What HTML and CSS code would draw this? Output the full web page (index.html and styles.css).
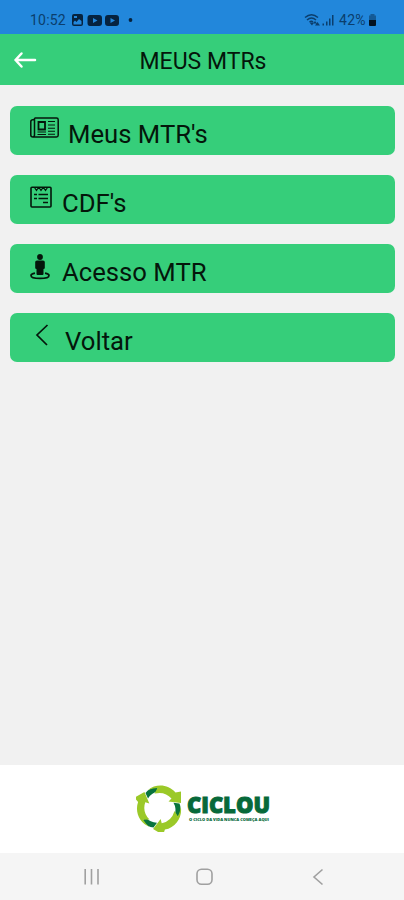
FILE: index.html
```html
<!DOCTYPE html>
<html lang="pt-BR">
<head>
  <meta charset="UTF-8">
  <meta name="viewport" content="width=device-width, initial-scale=1">
  <title>Meus MTRs</title>
  <link rel="stylesheet" href="styles.css">
</head>
<body>

  <!-- Barra de status -->
  <div class="status">
    <span class="hora">10:52</span>
    <svg class="notificacoes" width="64" height="14" viewBox="0 0 64 14">
      <path fill-rule="evenodd" d="M3 1h7q2 0 2 2v8q0 2-2 2H3q-2 0-2-2V3q0-2 2-2zM2.500 9v2.500h8V8L8 6 5.500 9 4 7.500zM3 3v2h3V3z"/>
      <path fill-rule="evenodd" d="M19 2h9q3 0 3 3v5q0 3-3 3h-9q-2.500 0-2.500-3V5q0-3 2.500-3zM22 5v5l4.500-2.500z"/>
      <path fill-rule="evenodd" d="M37 2h8q3 0 3 3v5q0 3-3 3h-8q-3 0-3-3V5q0-3 3-3zM39.500 5v5L44 7.500z"/>
      <circle cx="59.500" cy="7" r="1.900"/>
    </svg>
    <svg class="sinal" width="32" height="14" viewBox="0 0 32 14">
      <path d="M1 4.500Q7.500-1 14 4.500M3 7Q7.500 3 12 7M5.500 9Q7.500 7.500 9 9" fill="none" stroke="#0b3e6c" stroke-width="1.500"/>
      <path d="M8 12.500L5.500 9.500h4.500zM11 8l2 2.500H9zM13.500 9l2.500 3.500h-5z"/>
      <path d="M18.500 10.500H20v2h-1.500zM22 8.500h1.500v4H22zM25 5.500h1.500v7H25zM28 2h1.500v10.500H28z"/>
    </svg>
    <span class="bateria-texto">42%</span>
    <svg class="bateria" width="9" height="14" viewBox="0 0 9 14">
      <path d="M2.500 1h4v1.500H8V7.500H1v-5h1.500z" fill="#145a96"/>
      <path d="M1 7h7v5q0 1-1 1H2q-1 0-1-1z" fill="#031320"/>
    </svg>
  </div>

  <!-- Cabeçalho -->
  <header class="topo">
    <svg class="seta" width="24" height="18" viewBox="0 0 24 18">
      <path d="M22 9H2.500M8.500 2.500L2.500 9l6 6.500"/>
    </svg>
    <h1>MEUS MTRs</h1>
  </header>

  <!-- Menu -->
  <main class="menu">
    <button class="item" type="button">
      <svg class="icone jornal" width="29" height="21" viewBox="0 0 29 21">
        <path d="M4.500 1h22q1.700 0 1.700 1.700v15.600q0 1.700-1.700 1.700H3Q.8 20 .8 18V4.500Q.8 2.500 4.500 2.500M4.500 1v16.500Q4.500 20 3 20" stroke-width="1.500"/>
        <path d="M8.500 5h6.500v7.500H8.500z" stroke-width="1.800"/>
        <path d="M18 4.500h7M18 8h7M18 11.200h7M18 14.200h7M18 17.200h7M7.500 15h8.500M7.500 17.500h8.500" stroke-width="1.100"/>
      </svg>
      <span>Meus MTR's</span>
    </button>
    <button class="item" type="button">
      <svg class="icone bloco" width="22" height="22" viewBox="0 0 22 22">
        <path d="M2 1.200h18q1 0 1 1V20q0 1-1 1H2q-1 0-1-1V2.200q0-1 1-1z" stroke-width="1.600"/>
        <path d="M4.500 1.500l2 3 2-3M9 1.500l2 3 2-3M13.500 1.500l2 3 2-3" stroke-width="1.200"/>
        <path d="M4 8.500h3M8.500 8.500H18M4 12.500h3M8.500 12.500H18M13 16.500h5" stroke-width="1.700"/>
      </svg>
      <span>CDF's</span>
    </button>
    <button class="item" type="button">
      <svg class="icone pessoa" width="20" height="26" viewBox="0 0 20 26">
        <circle cx="10" cy="3" r="2.900" fill="#04160b" stroke="none"/>
        <path d="M7 6.500h6q1.800 0 1.800 1.500v6q0 1-1.300 1v5q0 1-1 1h-5q-1 0-1-1v-5q-1.300 0-1.300-1V8q0-1.500 1.800-1.500z" fill="#04160b" stroke="none"/>
        <path d="M5 19.200q-4 .7-4 2.200c0 4 18 4 18 0q0-1.500-4-2.200" stroke-width="1.700"/>
      </svg>
      <span>Acesso MTR</span>
    </button>
    <button class="item" type="button">
      <svg class="icone voltar" width="23" height="22" viewBox="0 0 23 22">
        <path d="M17.500 1L7 11l10 10" stroke-width="1.700"/>
      </svg>
      <span>Voltar</span>
    </button>
  </main>

  <!-- Rodapé com a marca -->
  <footer class="rodape">
    <svg class="simbolo" width="48" height="48" viewBox="0 0 48 48">
      <g id="volta">
        <path d="M9.500 9Q13 4 21 3l1.500 4Q15 9 12 14.500z" fill="#08743c"/>
        <path d="M12 6C20-.5 32 0 39.500 8.500L45 7.500V19L32.500 17.500l3-3Q29 7 18.500 9.500L21.500 4Q17 4 12 6z" fill="#9bc928"/>
      </g>
      <use href="#volta" transform="rotate(120 23.500 24)"/>
      <use href="#volta" transform="rotate(240 23.500 24)"/>
    </svg>
    <svg class="marca" width="87" height="48" viewBox="0 0 87 48">
      <text class="nome" x="3" y="28.500" textLength="83" lengthAdjust="spacingAndGlyphs">CICLOU</text>
      <text class="lema" x="5" y="37" textLength="80" lengthAdjust="spacingAndGlyphs">O CICLO DA VIDA NUNCA COMEÇA AQUI</text>
    </svg>
  </footer>

  <!-- Navegação do sistema -->
  <nav class="sistema">
    <svg width="18" height="18" viewBox="0 0 18 18"><path d="M2.200 1v15.500M8.500 1v15.500M15 1v15.500"/></svg>
    <svg width="18" height="18" viewBox="0 0 18 18"><rect x="1" y="1.200" width="15" height="15" rx="4.500"/></svg>
    <svg width="18" height="18" viewBox="0 0 18 18"><path d="M13.500 1.500L5 9l8.500 7.500"/></svg>
  </nav>

</body>
</html>
```

FILE: styles.css
```css
* {
  box-sizing: border-box;
}
body {
  margin: 0;
  height: 900px;
  display: flex;
  flex-direction: column;
  background-color: #f1f1f1;
  font-family: Roboto, sans-serif;
  color: #04160b;
}
svg {
  display: block;
  flex: none;
}
.status {
  height: 34px;
  padding: 6px 27px 0 30px;
  display: flex;
  align-items: center;
  background-color: #2287db;
  color: #0b3e6c;
  font-size: 14px;
}
.hora {
  width: 41px;
  letter-spacing: 0.2px;
}
.notificacoes {
  fill: #06233f;
}
.sinal {
  margin-left: auto;
  fill: #0b3e6c;
}
.bateria-texto {
  width: 29px;
  margin-left: 3px;
  letter-spacing: 0.3px;
}
.topo {
  height: 51px;
  display: grid;
  grid-template-columns: 40px 1fr 40px;
  align-items: center;
  background-color: #36ce7a;
}
.seta {
  margin-left: 13px;
  fill: none;
  stroke: #fff;
  stroke-width: 2.5;
  stroke-linecap: round;
  stroke-linejoin: round;
}
.topo h1 {
  margin: 3px 0 0 2px;
  text-align: center;
  font-size: 23px;
  font-weight: 400;
}
.menu {
  flex: 1;
  display: flex;
  flex-direction: column;
  gap: 20px;
  padding: 21px 9px 0 10px;
}
.item {
  height: 49px;
  display: flex;
  align-items: flex-start;
  padding: 0 20px;
  border: none;
  border-radius: 7px;
  background-color: #36ce7a;
  color: inherit;
  font-family: inherit;
  font-size: 25.7px;
  line-height: 30px;
  text-align: left;
  cursor: pointer;
}
.item span {
  margin-top: 13px;
}
.icone {
  fill: none;
  stroke: #04160b;
  margin-top: 11px;
}
.jornal {
  margin-right: 9px;
}
.bloco {
  margin-right: 10px;
}
.pessoa {
  margin-top: 10px;
  margin-right: 12px;
}
.voltar {
  margin-right: 12px;
}
.rodape {
  height: 88px;
  display: flex;
  justify-content: center;
  padding: 19px 0 0 3px;
  background-color: #fff;
}
.marca {
  font-family: "Open Sans", sans-serif;
  font-weight: 800;
  fill: #07693a;
}
.nome {
  font-size: 23px;
  stroke: #07693a;
  stroke-width: 1;
}
.lema {
  font-size: 3.5px;
}
.sistema {
  height: 47px;
  display: flex;
  justify-content: space-between;
  padding: 15px 77px 0 83px;
  background-color: #f5f5f5;
}
.sistema svg {
  fill: none;
  stroke: #a0a0a0;
  stroke-width: 1.6;
}
```
